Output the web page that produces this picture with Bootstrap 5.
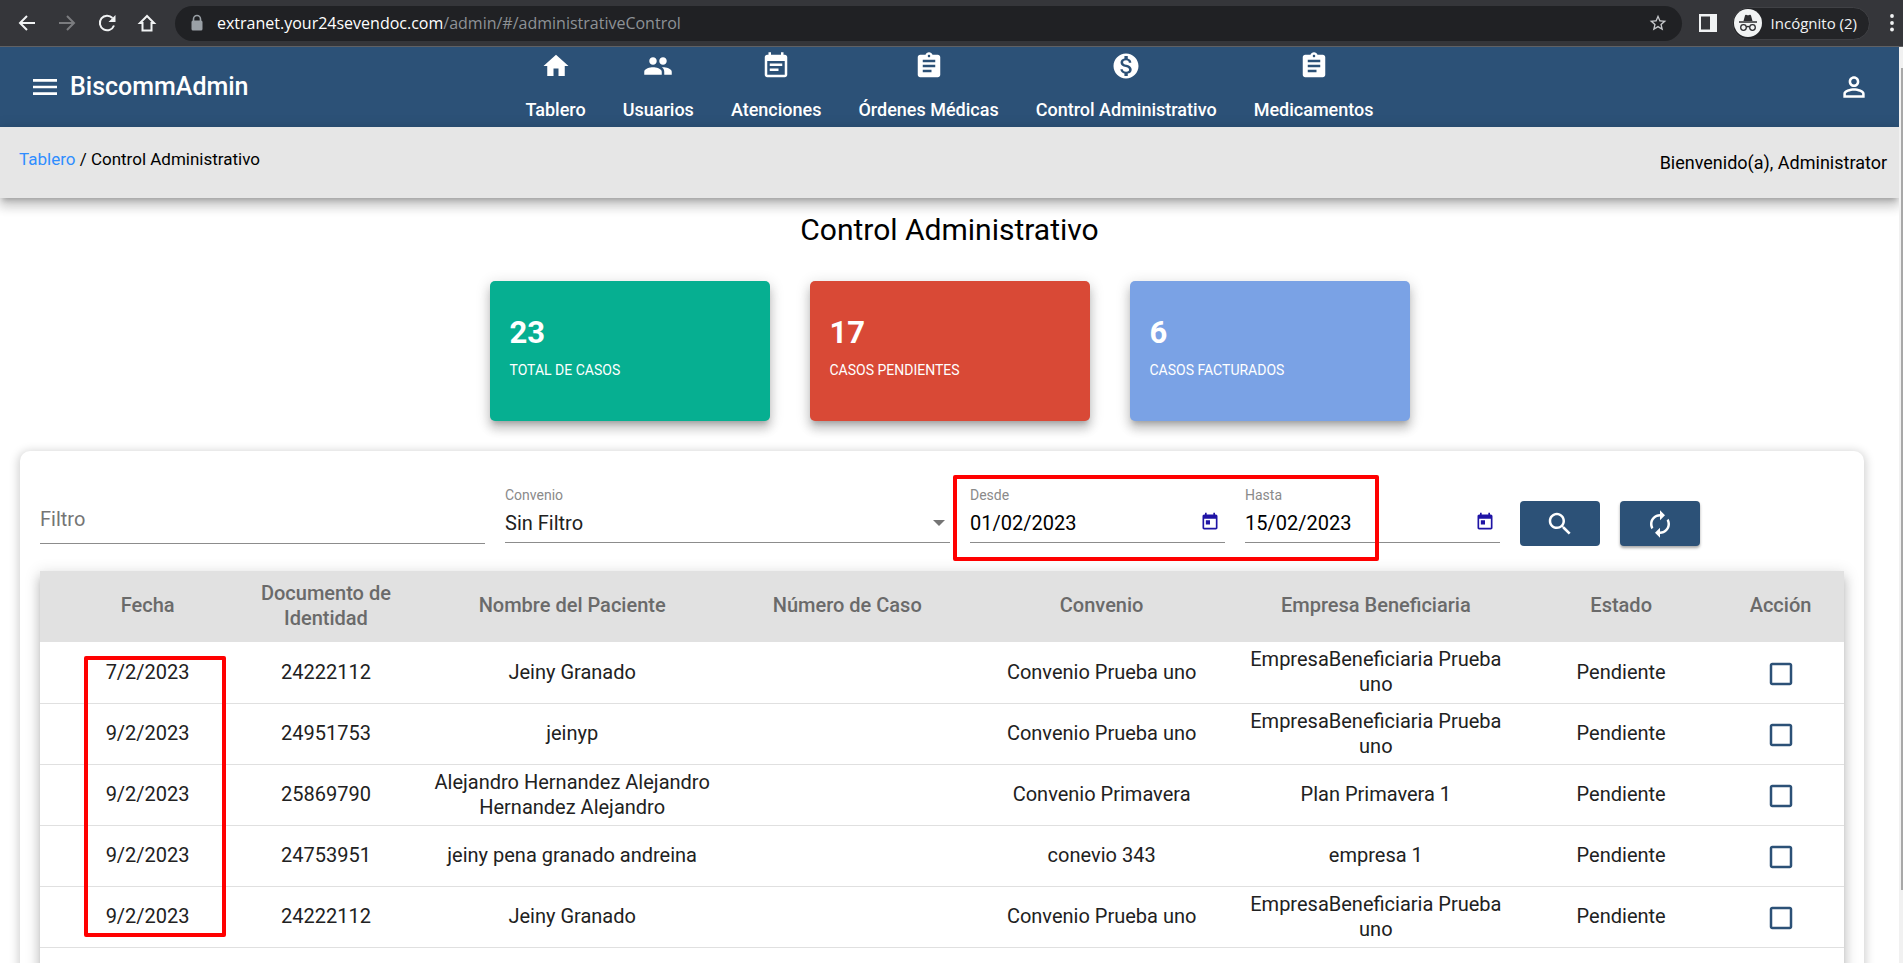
<!DOCTYPE html>
<html lang="es">
<head>
<meta charset="utf-8">
<meta name="viewport" content="width=device-width, initial-scale=1">
<title>BiscommAdmin - Control Administrativo</title>
<link href="https://cdn.jsdelivr.net/npm/bootstrap@5.3.0/dist/css/bootstrap.min.css" rel="stylesheet">
<style>
:root{--navy:#2c5177;--elev:0 5px 5px -3px rgba(0,0,0,.2),0 8px 10px 1px rgba(0,0,0,.14),0 3px 14px 2px rgba(0,0,0,.12)}
body{font-family:Roboto,"Liberation Sans",sans-serif;font-size:18px;color:#000;background:#fff}
button{font-family:inherit}
svg{display:block;flex:none}
.plain-btn{border:0;background:none;padding:0;color:inherit}
/* browser bar */
.browser{height:47px;background:#35363a;border-bottom:1px solid #606164;font-family:"Open Sans","Noto Sans",sans-serif;color:#f1f3f4;padding:0 5px 0 16px}
.browser .tools{gap:18px;width:159px}
.omnibox{height:35px;background:#202124;border-radius:18px;padding:0 14px 0 15px;gap:13px}
.url{font-size:16px;color:#8e9296;white-space:nowrap}
.url b{font-weight:400;color:#fff}
.incog{height:33px;border-radius:17px;background:#232427;border:1px solid #404145;padding:0 12px 0 1px;gap:9px;font-size:15px;margin-left:14px;margin-right:14px}
/* scrollbar */
.scroll-track{width:4px;background:#f1f1f1;padding:21px 0 73px 2px}
.scroll-thumb{background:#a8a8a8}
/* header */
.topbar{background:var(--navy);color:#fff;height:80px}
.topbar a{color:#fff;text-decoration:none}
.side{flex:1 1 0}
.side-start{padding-left:29px;gap:9px}
.side-end{padding-right:29px}
.brand-name{font-size:25px;font-weight:500;line-height:32px}
.main-nav{gap:37px;padding-top:4px;font-weight:500;line-height:22px}
.main-nav a{display:flex;flex-direction:column;align-items:center;gap:18px}
.crumbs{background:#e6e6e6;height:71px;box-shadow:var(--elev);padding:0 12px 0 19px;line-height:22px}
.crumbs nav{padding-top:21px;font-size:17px}
.crumbs p{padding-top:25px;margin:0}
.crumbs a{color:#2f8dff;text-decoration:none}
.page-title{font-size:30px;line-height:36px;font-weight:400;margin:14px 0 33px}
/* totals */
.totals{gap:40px;margin-bottom:30px}
.total{width:280px;height:140px;border-radius:5px;box-shadow:var(--elev);color:#fff;padding:36px 20px 0}
.total strong{display:block;font-size:31px;line-height:32px;margin-bottom:11px}
.total span{display:block;font-size:14px;line-height:20px}
.t-green{background:#06af91}.t-red{background:#d94936}.t-blue{background:#7aa2e5}
/* panel */
.panel{margin:0 35px 0 20px;border-radius:10px;padding:36px 20px 40px;box-shadow:0 2px 10px 2px rgba(0,0,0,.18);background:#fff}
.filters{display:grid;grid-template-columns:445fr 445fr 255fr 255fr 80px 80px 124fr;gap:20px;margin-bottom:25px;align-items:start;position:relative}
.fld label{display:block;font-size:14px;line-height:16px;color:#8a8a8a;margin-bottom:7px}
.fld .line{border-bottom:1px solid #8c8c8c;height:33px;padding-bottom:8px}
.fld input,.fld select{width:100%;min-width:0;border:0;outline:0;padding:0;background:none;font-size:20px;line-height:24px;height:24px;color:#000;font-family:inherit;border-radius:0}
.fld input{padding-top:1px}
.fld select{appearance:none;color:#212121;background:url("data:image/svg+xml,%3Csvg xmlns='http://www.w3.org/2000/svg' width='12' height='6'%3E%3Cpath d='M0 0h12L6 6z' fill='%23757575'/%3E%3C/svg%3E") no-repeat right 5px center}
.fld .free{height:38px;padding-bottom:13px;margin-top:19px}
.fld input::placeholder{color:#757575;opacity:1}
.cal{color:#1f14a5;margin-right:5px}
.act{height:45px;margin-top:14px;background:var(--navy);color:#fff;border-radius:4px;display:flex;align-items:center;justify-content:center;padding:0}
.act:hover{background:#234362;color:#fff}
.raised{box-shadow:0 2px 3px rgba(0,0,0,.35)}
.grid-wrap{position:relative;box-shadow:var(--elev);padding-bottom:60px}
.cases{width:100%;table-layout:fixed;font-size:20px;line-height:25px;text-align:center;color:#212121}
.cases th{height:71px;background:#e1e1e1;color:#6a6a6a;font-weight:500;padding:0 8px 2px}
.cases td{height:61px;border-bottom:1px solid #e0e0e0;padding:0 8px}
.cases th:first-child,.cases td:first-child{padding-left:24px;padding-right:0}
.cases th:last-child,.cases td:last-child{padding-left:0;padding-right:6px}
.w-date{width:10.6%}.w-doc{width:10.5%}.w-name{width:16.8%}.w-num{width:13.7%}.w-conv{width:14.5%}.w-emp{width:15.9%}.w-state{width:11.3%}
.pick{appearance:none;display:block;width:30px;height:30px;margin:3px auto 0;background:url("data:image/svg+xml,%3Csvg xmlns='http://www.w3.org/2000/svg' viewBox='0 0 24 24'%3E%3Cpath fill='%232c5177' d='M19 5v14H5V5h14m0-2H5c-1.1 0-2 .9-2 2v14c0 1.1.9 2 2 2h14c1.1 0 2-.9 2-2V5c0-1.1-.9-2-2-2z'/%3E%3C/svg%3E") center/30px}
/* red annotation frames, drawn over the content */
.frame{position:absolute;border:4px solid #f00;border-radius:2px;pointer-events:none}
.frame-dates{left:913px;top:-12px;width:426px;height:86px}
.frame-col{left:44px;top:85px;width:142px;height:281px}
</style>
</head>
<body class="vh-100 overflow-hidden d-flex flex-column">
<div class="browser d-flex align-items-center flex-shrink-0">
  <div class="tools d-flex align-items-center flex-shrink-0">
    <button class="plain-btn" aria-label="Atrás"><svg width="22" height="22" viewBox="0 0 22 22" fill="none" stroke="#f1f3f4" stroke-width="2"><path d="M19 11H4M11 4l-7 7 7 7"/></svg></button>
    <button class="plain-btn" aria-label="Adelante"><svg width="22" height="22" viewBox="0 0 22 22" fill="none" stroke="#7b7c7f" stroke-width="2"><path d="M3 11h15M11 4l7 7-7 7"/></svg></button>
    <button class="plain-btn" aria-label="Recargar"><svg width="22" height="22" viewBox="0 0 22 22" fill="none" stroke="#f1f3f4" stroke-width="2"><path d="M18 13.500A7.300 7.300 0 1 1 16.500 6"/><path d="M19.500 3v7h-7z" fill="#f1f3f4" stroke="none"/></svg></button>
    <button class="plain-btn" aria-label="Inicio"><svg width="22" height="22" viewBox="0 0 22 22" fill="none" stroke="#f1f3f4" stroke-width="2"><path d="M11 4l-7 7h2.500v7.500h9V11H18z"/></svg></button>
  </div>
  <div class="omnibox d-flex align-items-center flex-grow-1">
    <svg width="14" height="18" viewBox="0 0 14 18"><path d="M3.500 7V5a3.500 3.500 0 0 1 7 0v2" fill="none" stroke="#9aa0a6" stroke-width="1.600"/><rect x="1.500" y="6.500" width="11" height="10" rx="1.500" fill="#9aa0a6"/></svg>
    <div class="url flex-grow-1"><b>extranet.your24sevendoc.com</b>/admin/#/administrativeControl</div>
    <button class="plain-btn" aria-label="Marcador"><svg width="20" height="20" viewBox="0 0 24 24"><path fill="#c6c8cb" d="M22 9.240l-7.190-.62L12 2 9.190 8.630 2 9.240l5.460 4.730L5.820 21 12 17.270 18.180 21l-1.630-7.030L22 9.240zM12 15.400l-3.760 2.270 1-4.280-3.320-2.880 4.380-.38L12 6.100l1.710 4.040 4.380.38-3.320 2.880 1 4.280L12 15.400z"/></svg></button>
  </div>
  <button class="plain-btn ms-3" aria-label="Panel lateral"><svg width="20" height="20" viewBox="0 0 20 20"><path d="M1 1h18v18H1zM3 3.500v13h9v-13z" fill="#f1f3f4" fill-rule="evenodd"/></svg></button>
  <button class="plain-btn incog d-flex align-items-center">
    <svg width="28" height="28" viewBox="0 0 28 28"><circle cx="14" cy="14" r="14" fill="#f1f3f4"/><path d="M9.500 12l1.500-5.500c.3-.8 1-.8 1.600-.5.900.4 1.900.4 2.800 0 .6-.3 1.300-.3 1.600.5l1.500 5.500z" fill="#2b2c30"/><path d="M5 13h18" stroke="#2b2c30" stroke-width="1.500"/><g fill="none" stroke="#2b2c30" stroke-width="1.300"><circle cx="9.500" cy="18.500" r="2.800"/><circle cx="18.500" cy="18.500" r="2.800"/><path d="M12.300 18q1.700-1 3.400 0"/></g></svg>
    <span>Incógnito (2)</span>
  </button>
  <button class="plain-btn" aria-label="Menú"><svg width="14" height="20" viewBox="0 0 14 20" fill="#f1f3f4"><circle cx="8" cy="3" r="1.900"/><circle cx="8" cy="10" r="1.900"/><circle cx="8" cy="16.500" r="1.900"/></svg></button>
</div>

<div class="d-flex flex-grow-1 overflow-hidden">
<div class="flex-grow-1 overflow-hidden">
  <header class="topbar d-flex">
    <div class="side side-start d-flex align-items-center">
      <button class="plain-btn" aria-label="Abrir menú"><svg width="32" height="32" viewBox="0 0 24 24" fill="currentColor"><path d="M3 18h18v-2H3v2zm0-5h18v-2H3v2zm0-7v2h18V6H3z"/></svg></button>
      <a href="#" class="brand-name">BiscommAdmin</a>
    </div>
    <nav class="main-nav d-flex" aria-label="Principal">
      <a href="#"><svg width="30" height="30" viewBox="0 0 24 24" fill="currentColor"><path d="M10 20v-6h4v6h5v-8h3L12 3 2 12h3v8z"/></svg>Tablero</a>
      <a href="#"><svg width="30" height="30" viewBox="0 0 24 24" fill="currentColor"><path d="M16 11c1.660 0 2.990-1.340 2.990-3S17.660 5 16 5c-1.660 0-3 1.340-3 3s1.340 3 3 3zm-8 0c1.660 0 2.990-1.340 2.990-3S9.660 5 8 5C6.340 5 5 6.340 5 8s1.340 3 3 3zm0 2c-2.330 0-7 1.170-7 3.500V19h14v-2.500c0-2.330-4.670-3.500-7-3.500zm8 0c-.29 0-.62.020-.97.050 1.160.84 1.970 1.970 1.970 3.450V19h6v-2.500c0-2.330-4.670-3.500-7-3.500z"/></svg>Usuarios</a>
      <a href="#"><svg width="30" height="30" viewBox="0 0 24 24" fill="currentColor"><path d="M17 10H7v2h10v-2zm2-7h-1V1h-2v2H8V1H6v2H5c-1.110 0-1.990.9-1.990 2L3 19c0 1.100.89 2 2 2h14c1.100 0 2-.9 2-2V5c0-1.100-.9-2-2-2zm0 16H5V8h14v11zm-5-5H7v2h7v-2z"/></svg>Atenciones</a>
      <a href="#"><svg width="30" height="30" viewBox="0 0 24 24" fill="currentColor"><path d="M19 3h-4.180C14.400 1.840 13.300 1 12 1c-1.300 0-2.400.84-2.820 2H5c-1.100 0-2 .9-2 2v14c0 1.100.9 2 2 2h14c1.100 0 2-.9 2-2V5c0-1.100-.9-2-2-2zm-7 0c.55 0 1 .45 1 1s-.45 1-1 1-1-.45-1-1 .45-1 1-1zm2 14H7v-2h7v2zm3-4H7v-2h10v2zm0-4H7V7h10v2z"/></svg>Órdenes Médicas</a>
      <a href="#"><svg width="30" height="30" viewBox="0 0 24 24" fill="currentColor"><path d="M12 2C6.480 2 2 6.480 2 12s4.480 10 10 10 10-4.480 10-10S17.520 2 12 2zm1.410 16.090V20h-2.670v-1.930c-1.710-.36-3.160-1.460-3.270-3.400h1.960c.1 1.050.82 1.870 2.650 1.870 1.960 0 2.400-.98 2.400-1.590 0-.83-.44-1.610-2.670-2.140-2.480-.6-4.180-1.620-4.180-3.670 0-1.720 1.390-2.840 3.110-3.210V4h2.670v1.950c1.860.45 2.790 1.860 2.850 3.390H14.300c-.05-1.110-.64-1.870-2.220-1.870-1.500 0-2.400.68-2.400 1.640 0 .84.65 1.390 2.670 1.910s4.180 1.390 4.180 3.910c-.01 1.830-1.380 2.830-3.120 3.160z"/></svg>Control Administrativo</a>
      <a href="#"><svg width="30" height="30" viewBox="0 0 24 24" fill="currentColor"><path d="M19 3h-4.180C14.400 1.840 13.300 1 12 1c-1.300 0-2.400.84-2.820 2H5c-1.100 0-2 .9-2 2v14c0 1.100.9 2 2 2h14c1.100 0 2-.9 2-2V5c0-1.100-.9-2-2-2zm-7 0c.55 0 1 .45 1 1s-.45 1-1 1-1-.45-1-1 .45-1 1-1zm2 14H7v-2h7v2zm3-4H7v-2h10v2zm0-4H7V7h10v2z"/></svg>Medicamentos</a>
    </nav>
    <div class="side side-end d-flex align-items-center justify-content-end">
      <button class="plain-btn" aria-label="Mi cuenta"><svg width="32" height="32" viewBox="0 0 24 24" fill="currentColor"><path d="M12 5.900c1.160 0 2.100.94 2.100 2.100s-.94 2.100-2.100 2.100S9.900 9.160 9.900 8s.94-2.100 2.100-2.100m0 9c2.970 0 6.100 1.460 6.100 2.100v1.100H5.900V17c0-.64 3.130-2.100 6.100-2.100M12 4C9.790 4 8 5.790 8 8s1.790 4 4 4 4-1.790 4-4-1.790-4-4-4zm0 9c-2.670 0-8 1.340-8 4v3h16v-3c0-2.660-5.330-4-8-4z"/></svg></button>
    </div>
  </header>
  <div class="crumbs d-flex justify-content-between">
    <nav aria-label="Ruta"><a href="#">Tablero</a> / Control Administrativo</nav>
    <p>Bienvenido(a), Administrator</p>
  </div>

  <main>
    <h1 class="page-title text-center">Control Administrativo</h1>
    <div class="totals d-flex justify-content-center">
      <div class="total t-green"><strong>23</strong><span>TOTAL DE CASOS</span></div>
      <div class="total t-red"><strong>17</strong><span>CASOS PENDIENTES</span></div>
      <div class="total t-blue"><strong>6</strong><span>CASOS FACTURADOS</span></div>
    </div>

    <section class="panel">
      <form class="filters" onsubmit="return false">
        <div class="fld"><div class="line free"><input type="text" placeholder="Filtro" aria-label="Filtro"></div></div>
        <div class="fld"><label for="conv">Convenio</label><div class="line"><select id="conv"><option>Sin Filtro</option></select></div></div>
        <div class="fld"><label for="desde">Desde</label><div class="line d-flex align-items-center"><input id="desde" type="text" value="01/02/2023"><button type="button" class="plain-btn cal" aria-label="Elegir fecha desde"><svg width="20" height="20" viewBox="0 0 24 24" fill="currentColor"><path d="M19 3h-1V1h-2v2H8V1H6v2H5c-1.110 0-1.990.9-1.990 2L3 19c0 1.100.89 2 2 2h14c1.100 0 2-.9 2-2V5c0-1.100-.9-2-2-2zm0 16H5V8h14v11zM7 10h5v5H7z"/></svg></button></div></div>
        <div class="fld"><label for="hasta">Hasta</label><div class="line d-flex align-items-center"><input id="hasta" type="text" value="15/02/2023"><button type="button" class="plain-btn cal" aria-label="Elegir fecha hasta"><svg width="20" height="20" viewBox="0 0 24 24" fill="currentColor"><path d="M19 3h-1V1h-2v2H8V1H6v2H5c-1.110 0-1.990.9-1.990 2L3 19c0 1.100.89 2 2 2h14c1.100 0 2-.9 2-2V5c0-1.100-.9-2-2-2zm0 16H5V8h14v11zM7 10h5v5H7z"/></svg></button></div></div>
        <button class="btn act" aria-label="Buscar"><svg width="30" height="30" viewBox="0 0 24 24" fill="currentColor"><path d="M15.500 14h-.79l-.28-.27C15.410 12.590 16 11.110 16 9.500 16 5.910 13.090 3 9.500 3S3 5.910 3 9.500 5.910 16 9.500 16c1.610 0 3.090-.59 4.230-1.570l.27.28v.79l5 4.990L20.490 19l-4.990-5zm-6 0C7.010 14 5 11.990 5 9.500S7.010 5 9.500 5 14 7.010 14 9.500 11.990 14 9.500 14z"/></svg></button>
        <button type="button" class="btn act raised" aria-label="Actualizar"><svg width="30" height="30" viewBox="0 0 24 24" fill="currentColor"><path d="M12 6v3l4-4-4-4v3c-4.420 0-8 3.580-8 8 0 1.570.46 3.030 1.240 4.260L6.700 14.800c-.45-.83-.7-1.790-.7-2.800 0-3.310 2.690-6 6-6zm6.760 1.740L17.300 9.200c.44.84.7 1.790.7 2.800 0 3.310-2.690 6-6 6v-3l-4 4 4 4v-3c4.420 0 8-3.580 8-8 0-1.570-.46-3.030-1.240-4.260z"/></svg></button>
        <div class="frame frame-dates"></div>
      </form>

      <div class="grid-wrap">
        <table class="cases">
          <colgroup><col class="w-date"><col class="w-doc"><col class="w-name"><col class="w-num"><col class="w-conv"><col class="w-emp"><col class="w-state"><col></colgroup>
          <thead><tr><th>Fecha</th><th>Documento de Identidad</th><th>Nombre del Paciente</th><th>Número de Caso</th><th>Convenio</th><th>Empresa Beneficiaria</th><th>Estado</th><th>Acción</th></tr></thead>
          <tbody>
            <tr><td>7/2/2023</td><td>24222112</td><td>Jeiny Granado</td><td></td><td>Convenio Prueba uno</td><td>EmpresaBeneficiaria Prueba uno</td><td>Pendiente</td><td><input class="pick" type="checkbox" aria-label="Seleccionar caso 1"></td></tr>
            <tr><td>9/2/2023</td><td>24951753</td><td>jeinyp</td><td></td><td>Convenio Prueba uno</td><td>EmpresaBeneficiaria Prueba uno</td><td>Pendiente</td><td><input class="pick" type="checkbox" aria-label="Seleccionar caso 2"></td></tr>
            <tr><td>9/2/2023</td><td>25869790</td><td>Alejandro Hernandez Alejandro Hernandez Alejandro</td><td></td><td>Convenio Primavera</td><td>Plan Primavera 1</td><td>Pendiente</td><td><input class="pick" type="checkbox" aria-label="Seleccionar caso 3"></td></tr>
            <tr><td>9/2/2023</td><td>24753951</td><td>jeiny pena granado andreina</td><td></td><td>conevio 343</td><td>empresa 1</td><td>Pendiente</td><td><input class="pick" type="checkbox" aria-label="Seleccionar caso 4"></td></tr>
            <tr><td>9/2/2023</td><td>24222112</td><td>Jeiny Granado</td><td></td><td>Convenio Prueba uno</td><td>EmpresaBeneficiaria Prueba uno</td><td>Pendiente</td><td><input class="pick" type="checkbox" aria-label="Seleccionar caso 5"></td></tr>
          </tbody>
        </table>
        <div class="frame frame-col"></div>
      </div>
    </section>
  </main>
</div>
<div class="scroll-track d-flex flex-column flex-shrink-0"><div class="scroll-thumb flex-grow-1"></div></div>
</div>
<script src="https://cdn.jsdelivr.net/npm/bootstrap@5.3.0/dist/js/bootstrap.bundle.min.js"></script>
</body>
</html>
